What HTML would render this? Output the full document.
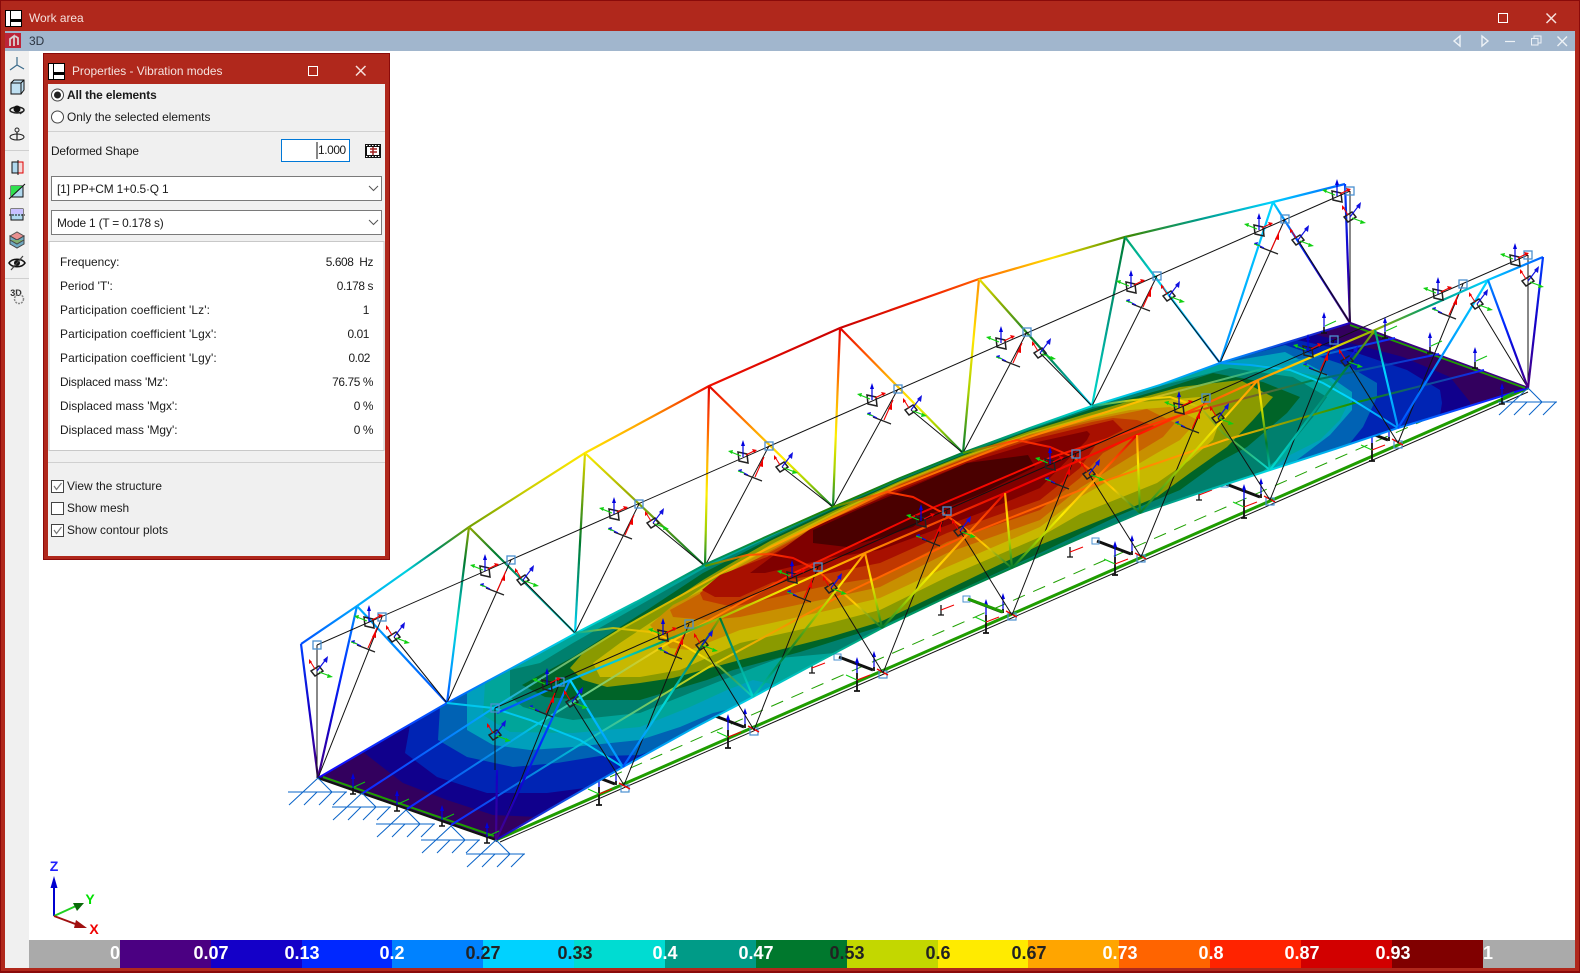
<!DOCTYPE html>
<html><head><meta charset="utf-8"><title>Work area</title>
<style>
html,body{margin:0;padding:0}
body{width:1580px;height:973px;overflow:hidden;position:relative;background:#b0281c;font-family:"Liberation Sans",sans-serif;font-size:11.9px;color:#1a1a1a}
.a{position:absolute;white-space:pre;line-height:16px}
.b{position:absolute}
.v{letter-spacing:-.4px}
.p{letter-spacing:.14px}
.lg{position:absolute;top:940px;height:28px}
.lt{position:absolute;top:940px;line-height:27px;font-weight:bold;font-size:18px;transform:translateX(-50%);color:#fff}
.d{color:#222}
</style></head><body>
<div class="b" style="left:0;top:0;width:1580px;height:1px;background:#8a0a0a"></div>
<div class="b" style="left:0;top:0;width:1px;height:973px;background:#8a0a0a"></div>
<div class="b" style="left:1579px;top:0;width:1px;height:973px;background:#8a0a0a"></div>
<div class="b" style="left:0;top:971px;width:1580px;height:2px;background:#8a0a0a"></div>
<div class="a" style="left:29px;top:10px;color:#f5e2de">Work area</div>
<div class="b" style="left:5px;top:31px;width:1570px;height:20px;background:#a1b6cd"></div>
<div class="b" style="left:5px;top:51px;width:24px;height:917px;background:#f0f0f0"></div>
<div class="b" style="left:29px;top:51px;width:1546px;height:889px;background:#fff"></div>
<div class="a" style="left:29px;top:33px;color:#2b3440">3D</div>

<svg class="b" style="left:0;top:0" width="1580" height="973" viewBox="0 0 1580 973" xmlns="http://www.w3.org/2000/svg">
<defs>
<linearGradient id="RG"><stop offset="0" stop-color="#e00000"/><stop offset=".2" stop-color="#ff5000"/><stop offset=".4" stop-color="#ffb000"/><stop offset=".6" stop-color="#ffee00"/><stop offset=".8" stop-color="#a0d000"/><stop offset="1" stop-color="#007a30"/></linearGradient>
<linearGradient id="OG"><stop offset="0" stop-color="#ff9000"/><stop offset=".35" stop-color="#ffe600"/><stop offset=".65" stop-color="#a8d000"/><stop offset="1" stop-color="#007a30"/></linearGradient>
<linearGradient id="YG"><stop offset="0" stop-color="#ffee00"/><stop offset=".35" stop-color="#a0b000"/><stop offset="1" stop-color="#007a30"/></linearGradient>
<linearGradient id="YC"><stop offset="0" stop-color="#e8e000"/><stop offset=".18" stop-color="#90b000"/><stop offset=".5" stop-color="#007a30"/><stop offset=".75" stop-color="#009b87"/><stop offset="1" stop-color="#00d8ff"/></linearGradient>
<linearGradient id="OT"><stop offset="0" stop-color="#ff9000"/><stop offset=".2" stop-color="#ffe600"/><stop offset=".4" stop-color="#a8d000"/><stop offset=".7" stop-color="#007a30"/><stop offset="1" stop-color="#00c8c0"/></linearGradient>
<linearGradient id="LC"><stop offset="0" stop-color="#90a800"/><stop offset=".25" stop-color="#007a30"/><stop offset=".55" stop-color="#009b87"/><stop offset="1" stop-color="#00dcd2"/></linearGradient>
<linearGradient id="GC"><stop offset="0" stop-color="#007a30"/><stop offset=".5" stop-color="#009b87"/><stop offset="1" stop-color="#00dcd2"/></linearGradient>
<linearGradient id="GB"><stop offset="0" stop-color="#90a800"/><stop offset=".2" stop-color="#007a30"/><stop offset=".35" stop-color="#009b87"/><stop offset=".55" stop-color="#00dcd2"/><stop offset=".8" stop-color="#00a0ff"/><stop offset="1" stop-color="#0050ff"/></linearGradient>
<linearGradient id="GA"><stop offset="0" stop-color="#00a060"/><stop offset=".4" stop-color="#00d8ff"/><stop offset="1" stop-color="#0090ff"/></linearGradient>
<linearGradient id="CA"><stop offset="0" stop-color="#00d8ff"/><stop offset="1" stop-color="#0090ff"/></linearGradient>
<linearGradient id="CB"><stop offset="0" stop-color="#00d8ff"/><stop offset="1" stop-color="#0050ff"/></linearGradient>
<linearGradient id="AB"><stop offset="0" stop-color="#00b0ff"/><stop offset="1" stop-color="#0050ff"/></linearGradient>
<linearGradient id="BP"><stop offset="0" stop-color="#0040ff"/><stop offset=".5" stop-color="#1400c8"/><stop offset="1" stop-color="#4b0082"/></linearGradient>
<linearGradient id="AP"><stop offset="0" stop-color="#0090ff"/><stop offset=".4" stop-color="#0028ff"/><stop offset=".7" stop-color="#1400c8"/><stop offset="1" stop-color="#4b0082"/></linearGradient>
<linearGradient id="CP"><stop offset="0" stop-color="#00d8ff"/><stop offset=".35" stop-color="#0028ff"/><stop offset=".6" stop-color="#1400c8"/><stop offset="1" stop-color="#4b0082"/></linearGradient>

<linearGradient id="f1" href="#BP" gradientUnits="userSpaceOnUse" x1="301" y1="644" x2="318" y2="778"/>
<linearGradient id="f2" href="#AP" gradientUnits="userSpaceOnUse" x1="357" y1="606" x2="318" y2="778"/>
<linearGradient id="f3" href="#AB" gradientUnits="userSpaceOnUse" x1="357" y1="606" x2="447" y2="703"/>
<linearGradient id="f4" href="#GB" gradientUnits="userSpaceOnUse" x1="469" y1="527" x2="447" y2="703"/>
<linearGradient id="f5" href="#LC" gradientUnits="userSpaceOnUse" x1="469" y1="527" x2="575" y2="633"/>
<linearGradient id="f6" href="#YC" gradientUnits="userSpaceOnUse" x1="585" y1="453" x2="575" y2="633"/>
<linearGradient id="f7" href="#YG" gradientUnits="userSpaceOnUse" x1="585" y1="453" x2="705" y2="566"/>
<linearGradient id="f8" href="#RG" gradientUnits="userSpaceOnUse" x1="709" y1="386" x2="705" y2="566"/>
<linearGradient id="f9" href="#RG" gradientUnits="userSpaceOnUse" x1="709" y1="386" x2="833" y2="507"/>
<linearGradient id="f10" href="#RG" gradientUnits="userSpaceOnUse" x1="840" y1="328" x2="833" y2="507"/>
<linearGradient id="f11" href="#RG" gradientUnits="userSpaceOnUse" x1="840" y1="328" x2="963" y2="453"/>
<linearGradient id="f12" href="#OG" gradientUnits="userSpaceOnUse" x1="979" y1="279" x2="963" y2="453"/>
<linearGradient id="f13" href="#YC" gradientUnits="userSpaceOnUse" x1="979" y1="279" x2="1092" y2="406"/>
<linearGradient id="f14" href="#GC" gradientUnits="userSpaceOnUse" x1="1125" y1="237" x2="1092" y2="406"/>
<linearGradient id="f15" href="#GA" gradientUnits="userSpaceOnUse" x1="1125" y1="237" x2="1220" y2="363"/>
<linearGradient id="f16" href="#CA" gradientUnits="userSpaceOnUse" x1="1273" y1="202" x2="1220" y2="363"/>
<linearGradient id="f17" href="#CP" gradientUnits="userSpaceOnUse" x1="1273" y1="202" x2="1350" y2="323"/>
<linearGradient id="f18" href="#BP" gradientUnits="userSpaceOnUse" x1="1345" y1="184" x2="1350" y2="323"/>

<linearGradient id="n1" href="#BP" gradientUnits="userSpaceOnUse" x1="497" y1="713" x2="496" y2="840"/>
<linearGradient id="n2" href="#AP" gradientUnits="userSpaceOnUse" x1="570" y1="680" x2="496" y2="840"/>
<linearGradient id="n3" href="#CA" gradientUnits="userSpaceOnUse" x1="570" y1="680" x2="623" y2="767"/>
<linearGradient id="n4" href="#GB" gradientUnits="userSpaceOnUse" x1="720" y1="618" x2="623" y2="767"/>
<linearGradient id="n5" href="#GC" gradientUnits="userSpaceOnUse" x1="720" y1="618" x2="753" y2="697"/>
<linearGradient id="n6" href="#OT" gradientUnits="userSpaceOnUse" x1="865" y1="553" x2="753" y2="697"/>
<linearGradient id="n7" href="#OG" gradientUnits="userSpaceOnUse" x1="865" y1="553" x2="882" y2="628"/>
<linearGradient id="n8" href="#RG" gradientUnits="userSpaceOnUse" x1="1005" y1="493" x2="882" y2="628"/>
<linearGradient id="n9" href="#OG" gradientUnits="userSpaceOnUse" x1="1005" y1="493" x2="1012" y2="568"/>
<linearGradient id="n10" href="#RG" gradientUnits="userSpaceOnUse" x1="1137" y1="435" x2="1012" y2="568"/>
<linearGradient id="n11" href="#OG" gradientUnits="userSpaceOnUse" x1="1137" y1="435" x2="1140" y2="513"/>
<linearGradient id="n12" href="#OG" gradientUnits="userSpaceOnUse" x1="1258" y1="380" x2="1140" y2="513"/>
<linearGradient id="n13" href="#OT" gradientUnits="userSpaceOnUse" x1="1258" y1="380" x2="1270" y2="470"/>
<linearGradient id="n14" href="#LC" gradientUnits="userSpaceOnUse" x1="1375" y1="330" x2="1270" y2="470"/>
<linearGradient id="n15" href="#GA" gradientUnits="userSpaceOnUse" x1="1375" y1="330" x2="1398" y2="428"/>
<linearGradient id="n16" href="#CB" gradientUnits="userSpaceOnUse" x1="1488" y1="280" x2="1398" y2="428"/>
<linearGradient id="n17" href="#AP" gradientUnits="userSpaceOnUse" x1="1488" y1="280" x2="1528" y2="388"/>
<linearGradient id="n18" href="#BP" gradientUnits="userSpaceOnUse" x1="1543" y1="257" x2="1528" y2="388"/>

<linearGradient id="tf" gradientUnits="userSpaceOnUse" x1="301" y1="0" x2="1345" y2="0"><stop offset="0" stop-color="#0050ff"/><stop offset=".054" stop-color="#00a8ff"/><stop offset=".10" stop-color="#00d0e0"/><stop offset=".13" stop-color="#008a60"/><stop offset=".16" stop-color="#70a000"/><stop offset=".22" stop-color="#d0d000"/><stop offset=".27" stop-color="#ffe800"/><stop offset=".33" stop-color="#ffa000"/><stop offset=".39" stop-color="#f01000"/><stop offset=".516" stop-color="#c80000"/><stop offset=".60" stop-color="#f02000"/><stop offset=".65" stop-color="#ff6000"/><stop offset=".72" stop-color="#ffe000"/><stop offset=".79" stop-color="#408800"/><stop offset=".86" stop-color="#009b87"/><stop offset=".93" stop-color="#00d0ff"/><stop offset="1" stop-color="#0060ff"/></linearGradient>
<linearGradient id="tn" gradientUnits="userSpaceOnUse" x1="497" y1="0" x2="1543" y2="0"><stop offset="0" stop-color="#0040ff"/><stop offset=".07" stop-color="#00b0ff"/><stop offset=".12" stop-color="#00d0d0"/><stop offset=".16" stop-color="#00a060"/><stop offset=".213" stop-color="#a0c000"/><stop offset=".28" stop-color="#ffe800"/><stop offset=".352" stop-color="#ff9000"/><stop offset=".486" stop-color="#e80000"/><stop offset=".612" stop-color="#ff1000"/><stop offset=".727" stop-color="#ff9000"/><stop offset=".786" stop-color="#ffe800"/><stop offset=".839" stop-color="#90b000"/><stop offset=".89" stop-color="#009b70"/><stop offset=".945" stop-color="#00d0ff"/><stop offset="1" stop-color="#0060ff"/></linearGradient>
<linearGradient id="et" gradientUnits="userSpaceOnUse" x1="318" y1="0" x2="1350" y2="0"><stop offset="0" stop-color="#1400ff"/><stop offset=".125" stop-color="#0060ff"/><stop offset=".25" stop-color="#00d8e0"/><stop offset=".375" stop-color="#009060"/><stop offset=".5" stop-color="#208000"/><stop offset=".625" stop-color="#008040"/><stop offset=".75" stop-color="#00d8d8"/><stop offset=".875" stop-color="#0090ff"/><stop offset="1" stop-color="#2000c0"/></linearGradient>
<linearGradient id="el" gradientUnits="userSpaceOnUse" x1="496" y1="0" x2="1528" y2="0"><stop offset="0" stop-color="#2000c0"/><stop offset=".125" stop-color="#0090ff"/><stop offset=".25" stop-color="#00d0e0"/><stop offset=".375" stop-color="#00a070"/><stop offset=".5" stop-color="#008040"/><stop offset=".625" stop-color="#009070"/><stop offset=".75" stop-color="#00d8e0"/><stop offset=".875" stop-color="#0080ff"/><stop offset="1" stop-color="#1000ff"/></linearGradient>
<linearGradient id="s1" gradientUnits="userSpaceOnUse" x1="363" y1="0" x2="1395" y2="0"><stop offset="0" stop-color="#1020ff"/><stop offset=".125" stop-color="#00b0ff"/><stop offset=".25" stop-color="#c0c000"/><stop offset=".375" stop-color="#ffb000"/><stop offset=".5" stop-color="#ff7000"/><stop offset=".625" stop-color="#ff7000"/><stop offset=".75" stop-color="#ffc000"/><stop offset=".875" stop-color="#00b0a0"/><stop offset="1" stop-color="#1020ff"/></linearGradient>
<linearGradient id="s2" gradientUnits="userSpaceOnUse" x1="407" y1="0" x2="1439" y2="0"><stop offset="0" stop-color="#1020ff"/><stop offset=".125" stop-color="#00c8e0"/><stop offset=".25" stop-color="#ffd000"/><stop offset=".375" stop-color="#ff2000"/><stop offset=".5" stop-color="#ee0000"/><stop offset=".625" stop-color="#ff1000"/><stop offset=".75" stop-color="#ff4000"/><stop offset=".875" stop-color="#008050"/><stop offset="1" stop-color="#1020ff"/></linearGradient>
<linearGradient id="s3" gradientUnits="userSpaceOnUse" x1="451" y1="0" x2="1484" y2="0"><stop offset="0" stop-color="#1020ff"/><stop offset=".125" stop-color="#00c0d0"/><stop offset=".25" stop-color="#e0d000"/><stop offset=".375" stop-color="#ff7000"/><stop offset=".5" stop-color="#ff5000"/><stop offset=".625" stop-color="#ff7000"/><stop offset=".75" stop-color="#ffb000"/><stop offset=".875" stop-color="#109000"/><stop offset="1" stop-color="#1020ff"/></linearGradient>
<linearGradient id="c2" gradientUnits="userSpaceOnUse" x1="575" y1="0" x2="753" y2="0"><stop offset="0" stop-color="#00b0a0"/><stop offset=".25" stop-color="#d0c000"/><stop offset=".5" stop-color="#ffc000"/><stop offset=".7" stop-color="#ffe000"/><stop offset=".88" stop-color="#40a050"/><stop offset="1" stop-color="#00d0d0"/></linearGradient>
<linearGradient id="c3" gradientUnits="userSpaceOnUse" x1="705" y1="0" x2="882" y2="0"><stop offset="0" stop-color="#40a000"/><stop offset=".25" stop-color="#ff6000"/><stop offset=".5" stop-color="#f01000"/><stop offset=".65" stop-color="#ff4000"/><stop offset=".85" stop-color="#ffd000"/><stop offset="1" stop-color="#007a30"/></linearGradient>
<linearGradient id="c4" gradientUnits="userSpaceOnUse" x1="833" y1="0" x2="1012" y2="0"><stop offset="0" stop-color="#40a000"/><stop offset=".25" stop-color="#ff6000"/><stop offset=".5" stop-color="#f01000"/><stop offset=".65" stop-color="#ff4000"/><stop offset=".85" stop-color="#ffd000"/><stop offset="1" stop-color="#007a30"/></linearGradient>
<linearGradient id="c5" gradientUnits="userSpaceOnUse" x1="963" y1="0" x2="1140" y2="0"><stop offset="0" stop-color="#40a000"/><stop offset=".25" stop-color="#ff5000"/><stop offset=".5" stop-color="#f01000"/><stop offset=".7" stop-color="#ff5000"/><stop offset=".85" stop-color="#ffd000"/><stop offset="1" stop-color="#007a30"/></linearGradient>
<linearGradient id="c6" gradientUnits="userSpaceOnUse" x1="1092" y1="0" x2="1270" y2="0"><stop offset="0" stop-color="#00b0a0"/><stop offset=".25" stop-color="#e0d000"/><stop offset=".5" stop-color="#ffd000"/><stop offset=".75" stop-color="#60a020"/><stop offset="1" stop-color="#00d8d8"/></linearGradient>
<linearGradient id="c7" gradientUnits="userSpaceOnUse" x1="1220" y1="0" x2="1398" y2="0"><stop offset="0" stop-color="#0090ff"/><stop offset=".4" stop-color="#00c8e8"/><stop offset=".7" stop-color="#00d8ff"/><stop offset="1" stop-color="#0090ff"/></linearGradient>

<g id="S"><path d="M-5-5 4-3 5 6-4 4Z" fill="none" stroke="#222" stroke-width="1.5"/><path d="M0 0V-13" stroke="#0000e0" stroke-width="1.2"/><path d="M0-17-2-11H2Z" fill="#0000e0"/><path d="M-2-1-12-5" stroke="#10d010" stroke-width="1.1"/><path d="M-15-6-10-7-11-3Z" fill="#10d010"/><path d="M3-2 11-6" stroke="#f00000" stroke-width="1.1"/><path d="M14-7 9-8 11-4Z" fill="#f00000"/></g>
<g id="D"><path d="M-6 0 2-5 6 0-2 5Z" fill="none" stroke="#222" stroke-width="1.5"/><path d="M0 0 10-13" stroke="#1010e0" stroke-width="1.2"/><path d="M11-15 6-11 10-8Z" fill="#1010e0"/><path d="M2 1 13 5" stroke="#10d010" stroke-width="1.1"/><path d="M16 6 11 3 10 7Z" fill="#10d010"/><path d="M-2-2-7-10" stroke="#f00000" stroke-width="1"/><path d="M-8-12-8-7-5-9Z" fill="#f00000"/></g>
<g id="X"><path d="M-8-3 10 4" stroke="#222" stroke-width="1.3"/><path d="M-4-2-12-6" stroke="#1010e0" stroke-width="1.1"/><path d="M-14-7-10-8-11-4Z" fill="#1010e0"/><path d="M-8-4-14-6" stroke="#10d010" stroke-width="1"/><path d="M3 0 12-20" stroke="#f00000" stroke-width="1.1"/><path d="M11-18 7-11 11-10Z" fill="#f00000"/></g>
<rect id="Q" x="-4" y="-4" width="8" height="8" fill="none" stroke="#4a90d0" stroke-width="1.3"/>
<g id="U"><path d="M-44-16-10-3" stroke="#111" stroke-width="3"/><rect x="-49" y="-19" width="7" height="6" fill="none" stroke="#4a90d0"/><rect x="-4" y="-2" width="8" height="7" fill="none" stroke="#4a90d0" stroke-width="1.2"/><path d="M-6-4 5 2" stroke="#f00000" stroke-width="1.3"/><path d="M-26-12V0" stroke="#0000e0" stroke-width="1.3"/><path d="M-26-16-28-10H-24Z" fill="#0000e0"/><path d="M-26 0V18M-29 18H-23" stroke="#111" stroke-width="1.8"/><path d="M-26 7-13 2" stroke="#f00000" stroke-width="1.1"/><path d="M-26 7-37 2" stroke="#10d010" stroke-width="1.1"/><path d="M-9-18V-6" stroke="#0000e0" stroke-width="1.2"/><path d="M-9-22-11-16H-7Z" fill="#0000e0"/><path d="M-9-6V-2" stroke="#111" stroke-width="1.8"/><path d="M-71-10V0M-74 0H-68" stroke="#111" stroke-width="1.3"/><path d="M-71-5-58-10" stroke="#f00000"/></g>
<g id="I"><path d="M0-16V-5" stroke="#0000e0" stroke-width="1.2"/><path d="M0-20-2-14H2Z" fill="#0000e0"/><path d="M0-5V1M-3 1H3" stroke="#111" stroke-width="1.6"/><path d="M1-6 12-11" stroke="#10c010"/></g>
<g id="H" fill="none" stroke="#0a64c8" stroke-width="1"><path d="M-30 14H29M-29 27 0 0 14 14M-14 27-1 14M1 27 14 14M15 27 28 14" /></g>
</defs>

<!-- dashed, thick near beams -->
<path d="M610 777 1500 387" stroke="#1fa000" stroke-width="1" stroke-dasharray="13 9" fill="none"/>
<path d="M496 840 1528 388" stroke="#1f9c00" stroke-width="3" fill="none"/>
<path d="M500 842 1528 392" stroke="#111" stroke-width="1" fill="none"/>
<!-- lower units, behind the deck -->
<use href="#U" x="625" y="787"/><use href="#U" x="754" y="730"/><use href="#U" x="883" y="673"/><use href="#U" x="1012" y="615"/><use href="#U" x="1141" y="557"/><use href="#U" x="1270" y="500"/><use href="#U" x="1398" y="443"/>
<path d="M968 599 1003 612" stroke="#1f9c00" stroke-width="3"/>

<!-- far truss -->
<g fill="none" stroke-width="2.2">
<polyline points="301,644 357,606 469,527 585,453 709,386 840,328 979,279 1125,237 1273,202 1345,184" stroke="url(#tf)"/>
<line x1="301" y1="644" x2="318" y2="778" stroke="url(#f1)"/><line x1="357" y1="606" x2="318" y2="778" stroke="url(#f2)"/><line x1="357" y1="606" x2="447" y2="703" stroke="url(#f3)"/><line x1="469" y1="527" x2="447" y2="703" stroke="url(#f4)"/><line x1="469" y1="527" x2="575" y2="633" stroke="url(#f5)"/><line x1="585" y1="453" x2="575" y2="633" stroke="url(#f6)"/><line x1="585" y1="453" x2="705" y2="566" stroke="url(#f7)"/><line x1="709" y1="386" x2="705" y2="566" stroke="url(#f8)"/><line x1="709" y1="386" x2="833" y2="507" stroke="url(#f9)"/><line x1="840" y1="328" x2="833" y2="507" stroke="url(#f10)"/><line x1="840" y1="328" x2="963" y2="453" stroke="url(#f11)"/><line x1="979" y1="279" x2="963" y2="453" stroke="url(#f12)"/><line x1="979" y1="279" x2="1092" y2="406" stroke="url(#f13)"/><line x1="1125" y1="237" x2="1092" y2="406" stroke="url(#f14)"/><line x1="1125" y1="237" x2="1220" y2="363" stroke="url(#f15)"/><line x1="1273" y1="202" x2="1220" y2="363" stroke="url(#f16)"/><line x1="1273" y1="202" x2="1350" y2="323" stroke="url(#f17)"/><line x1="1345" y1="184" x2="1350" y2="323" stroke="url(#f18)"/>
</g>

<!-- far black lines -->
<path d="M317 645 1350 191M317 645V778M382 617 318 778M394 637 447 703M511 560 447 703M523 580 575 633M639 504 575 633M653 523 705 566M769 446 705 566M782 467 833 507M898 389 833 507M911 410 963 453M1027 332 963 453M1040 353 1092 406M1157 276 1092 406M1169 296 1220 363M1285 219 1220 363M1298 240 1350 323M1350 191V323" stroke="#111" stroke-width="1" fill="none"/>

<!-- deck contours -->
<polygon fill="#33005e" points="318,778 383,740 447,703 512,668 576,633 640,600 704,565 770,535 833,507 900,478 962,453 1030,428 1092,406 1160,385 1220,363 1285,343 1350,323 1528,388 1463,408 1398,428 1335,449 1270,470 1205,491 1140,513 1076,540 1012,568 947,597 882,628 818,662 753,697 690,730 623,767 560,803 496,840"/>
<polygon fill="#10008c" points="363,752 383,740 447,703 512,668 576,633 640,600 704,565 770,535 833,507 900,478 962,453 1030,428 1092,406 1160,385 1220,363 1285,343 1313,334 1350,343 1403,357 1450,377 1470,402 1470,406 1398,428 1335,449 1270,470 1205,491 1140,513 1076,540 1012,568 947,597 882,628 818,662 753,697 690,730 623,767 560,803 537,817 493,815 447,800 403,783"/>
<polygon fill="#0024b4" points="410,725 447,703 512,668 576,633 640,600 704,565 770,535 833,507 900,478 962,453 1030,428 1092,406 1160,385 1220,363 1285,343 1297,340 1357,353 1407,370 1440,390 1442,403 1440,415 1398,428 1335,449 1270,470 1205,491 1140,513 1076,540 1012,568 947,597 882,628 818,662 753,697 690,730 623,767 585,788 547,793 487,793 437,777 405,753"/>
<polygon fill="#0062b4" points="440,707 447,703 512,668 576,633 640,600 704,565 770,535 833,507 900,478 962,453 1030,428 1092,406 1160,385 1220,363 1285,345 1350,367 1377,383 1377,397 1363,427 1350,443 1335,449 1270,470 1205,491 1140,513 1076,540 1012,568 947,597 882,628 818,662 753,697 690,730 648,752 640,755 600,756 557,763 513,767 467,757 438,740"/>
<polygon fill="#00a0bc" points="467,692 512,668 576,633 640,600 704,565 770,535 833,507 900,478 962,453 1030,428 1092,406 1160,385 1220,363 1285,352 1323,372 1352,392 1352,410 1330,435 1297,460 1270,470 1205,491 1140,513 1076,540 1012,568 947,597 882,628 818,662 753,697 730,709 713,713 680,727 640,740 573,747 530,750 493,745 467,730"/>
<polygon fill="#00a59a" points="485,683 512,668 576,633 640,600 704,565 770,535 833,507 900,478 962,453 1030,428 1092,406 1160,385 1220,363 1263,365 1327,378 1350,400 1340,420 1320,440 1290,455 1270,470 1205,491 1140,513 1076,540 1012,568 947,597 882,628 818,662 775,685 753,680 727,690 690,707 640,727 573,733 510,732 483,715"/>
<polygon fill="#00806e" points="510,670 540,663 573,643 640,605 703,569 770,537 833,508 900,479 962,454 1030,429 1092,407 1160,386 1230,368 1293,377 1327,397 1313,417 1280,457 1262,472 1205,491 1140,513 1076,540 1012,568 947,597 882,628 835,653 780,658 753,668 690,693 640,713 573,720 557,717 523,707 510,697"/>
<polygon fill="#006428" points="522,685 540,675 573,657 620,627 647,610 703,573 770,539 833,509 900,480 962,455 1030,430 1092,409 1160,390 1213,373 1263,382 1300,397 1287,413 1247,447 1217,463 1180,490 1120,515 1040,553 947,596 882,626 800,652 733,670 707,680 640,700 583,700 545,697"/>
<polygon fill="#8a9a00" points="570,668 583,653 620,630 647,615 673,600 703,580 740,558 770,541 833,511 900,481 962,456 1030,431 1092,412 1140,398 1180,387 1240,380 1273,397 1253,420 1227,447 1190,473 1157,497 1040,545 947,590 880,622 830,637 740,660 673,678 640,683 607,687 583,680"/>
<polygon fill="#c8b800" points="593,663 620,643 650,623 670,610 703,587 740,563 770,545 833,513 900,482 962,457 1030,433 1092,415 1140,402 1200,397 1220,420 1213,440 1190,460 1157,483 1080,514 1040,537 947,577 880,610 830,623 740,643 680,670 640,677 600,677"/>
<polygon fill="#c89000" points="650,625 673,605 703,590 740,565 770,548 833,515 900,483 962,458 1030,434 1092,418 1130,410 1170,407 1198,420 1180,440 1157,453 1123,473 1080,497 1040,527 947,567 880,598 830,610 740,630 690,650 670,648"/>
<polygon fill="#c86400" points="670,610 703,592 740,569 770,551 833,517 900,484 962,459 1030,435 1092,420 1147,409 1175,423 1163,437 1130,457 1080,488 1040,520 947,553 880,587 830,598 740,617 707,620 673,617"/>
<polygon fill="#c03800" points="700,593 727,573 767,554 833,519 900,485 962,460 1030,437 1092,422 1113,418 1137,420 1157,427 1140,433 1103,453 1080,478 1040,510 947,542 880,577 830,585 733,607 703,600"/>
<polygon fill="#a81000" points="702,590 720,575 767,557 807,535 833,522 900,487 962,462 1030,440 1092,425 1113,420 1123,430 1097,443 1080,468 1040,500 947,533 880,563 830,573 773,582 740,597 715,597"/>
<polygon fill="#800000" points="750,573 777,553 813,527 900,490 967,463 1033,443 1087,431 1090,434 1087,440 1040,488 980,513 913,538 880,550 830,558 765,573"/>
<polygon fill="#4a0000" points="813,530 857,510 900,492 967,463 1028,455 1035,467 983,493 933,513 913,527 880,538 847,547 813,543"/>

<!-- deck edges -->
<g fill="none">
<polyline stroke="url(#et)" stroke-width="2" points="318,778 383,740 447,703 512,668 576,633 640,600 704,565 770,535 833,507 900,478 962,453 1030,428 1092,406 1160,385 1220,363 1285,343 1350,323"/>
<polyline stroke="url(#el)" stroke-width="2" points="496,840 560,803 623,767 690,730 753,697 818,662 882,628 947,597 1012,568 1076,540 1140,513 1205,491 1270,470 1335,449 1398,428 1463,408 1528,388"/>
<path d="M318 778 496 840" stroke="#111" stroke-width="2"/>
<path d="M323 777 494 836" stroke="#1f9c00" stroke-width="2"/>
<path d="M1350 323 1528 388" stroke="#3c0080" stroke-width="2.5"/>
<path d="M1350 325 1525 388" stroke="#1f9c00" stroke-width="1.8"/>
<!-- stringers -->
<polyline stroke="url(#s1)" stroke-width="2" points="363,793 492,709 621,629 750,557 879,495 1008,444 1137,402 1266,368 1395,338"/>
<polyline stroke="url(#s2)" stroke-width="2" points="407,809 536,725 665,645 794,573 923,512 1052,457 1181,415 1310,381 1439,354"/>
<polyline stroke="url(#s3)" stroke-width="2" points="451,825 581,744 709,667 838,597 967,535 1096,484 1225,440 1354,403 1484,370"/>
<!-- cross arches -->
<polyline stroke="#00c8f0" stroke-width="2" points="447,703 493,708 530,720 580,740 623,767"/>
<polyline stroke="url(#c2)" stroke-width="2" points="575,633 613,628 650,632 680,643 720,667 753,697"/>
<polyline stroke="url(#c3)" stroke-width="2" points="705,566 747,555 770,554 793,558 817,570 860,608 882,628"/>
<polyline stroke="url(#c4)" stroke-width="2" points="833,507 887,492 913,497 943,513 967,530 1012,568"/>
<polyline stroke="url(#c5)" stroke-width="2" points="963,453 1017,440 1050,447 1073,457 1100,477 1140,513"/>
<polyline stroke="url(#c6)" stroke-width="2" points="1092,406 1133,400 1170,397 1200,407 1223,433 1270,470"/>
<polyline stroke="url(#c7)" stroke-width="2" points="1220,363 1250,365 1290,370 1323,383 1353,400 1398,428"/>
<!-- near black lines: end at the undeformed frame -->
<path d="M495 708 1528 255M495 708V770M560 682 496 842M572 702 624 785M689 624 624 785M702 645 754 730M818 567 754 730M831 588 883 673M947 511 883 673M960 531 1012 615M1076 454 1012 615M1089 474 1141 557M1206 398 1141 557M1218 418 1270 500M1334 340 1270 500M1347 361 1398 443M1463 284 1398 443M1477 304 1528 388M1528 255V388" stroke="#111" stroke-width="1"/>
<!-- near truss -->
<g stroke-width="2.2">
<polyline points="497,713 570,680 720,618 865,553 1005,493 1137,435 1258,380 1375,330 1488,280 1543,257" stroke="url(#tn)"/>
<line x1="497" y1="770" x2="496" y2="840" stroke="url(#n1)"/><line x1="570" y1="680" x2="496" y2="840" stroke="url(#n2)"/><line x1="570" y1="680" x2="623" y2="767" stroke="url(#n3)"/><line x1="720" y1="618" x2="623" y2="767" stroke="url(#n4)"/><line x1="720" y1="618" x2="753" y2="697" stroke="url(#n5)"/><line x1="865" y1="553" x2="753" y2="697" stroke="url(#n6)"/><line x1="865" y1="553" x2="882" y2="628" stroke="url(#n7)"/><line x1="1005" y1="493" x2="882" y2="628" stroke="url(#n8)"/><line x1="1005" y1="493" x2="1012" y2="568" stroke="url(#n9)"/><line x1="1137" y1="435" x2="1012" y2="568" stroke="url(#n10)"/><line x1="1137" y1="435" x2="1140" y2="513" stroke="url(#n11)"/><line x1="1258" y1="380" x2="1140" y2="513" stroke="url(#n12)"/><line x1="1258" y1="380" x2="1270" y2="470" stroke="url(#n13)"/><line x1="1375" y1="330" x2="1270" y2="470" stroke="url(#n14)"/><line x1="1375" y1="330" x2="1398" y2="428" stroke="url(#n15)"/><line x1="1488" y1="280" x2="1398" y2="428" stroke="url(#n16)"/><line x1="1488" y1="280" x2="1528" y2="388" stroke="url(#n17)"/><line x1="1543" y1="257" x2="1528" y2="388" stroke="url(#n18)"/>
</g>
</g>

<!-- supports -->
<use href="#H" x="318" y="778"/><use href="#H" x="362" y="793"/><use href="#H" x="406" y="810"/><use href="#H" x="451" y="826"/><use href="#H" x="496" y="840"/><use href="#H" x="1528" y="388"/>
<!-- edge units -->
<use href="#I" x="353" y="793"/><use href="#I" x="397" y="810"/><use href="#I" x="442" y="825"/><use href="#I" x="487" y="842"/><use href="#I" x="1324" y="332"/><use href="#I" x="1385" y="337"/><use href="#I" x="1430" y="352"/><use href="#I" x="1475" y="367"/><use href="#I" x="1502" y="403"/>
<!-- far row -->
<use href="#Q" x="317" y="645"/><use href="#Q" x="382" y="617"/><use href="#Q" x="511" y="560"/><use href="#Q" x="639" y="504"/><use href="#Q" x="769" y="446"/><use href="#Q" x="898" y="389"/><use href="#Q" x="1027" y="332"/><use href="#Q" x="1157" y="276"/><use href="#Q" x="1285" y="219"/><use href="#Q" x="1350" y="191"/>
<use href="#S" x="369" y="622"/><use href="#S" x="485" y="571"/><use href="#S" x="614" y="514"/><use href="#S" x="743" y="457"/><use href="#S" x="872" y="400"/><use href="#S" x="1001" y="343"/><use href="#S" x="1131" y="287"/><use href="#S" x="1259" y="230"/><use href="#S" x="1337" y="196"/>
<use href="#D" x="317" y="671"/><use href="#D" x="394" y="637"/><use href="#D" x="523" y="580"/><use href="#D" x="653" y="523"/><use href="#D" x="782" y="467"/><use href="#D" x="911" y="410"/><use href="#D" x="1040" y="353"/><use href="#D" x="1169" y="296"/><use href="#D" x="1298" y="240"/><use href="#D" x="1350" y="217"/>
<use href="#X" x="365" y="648"/><use href="#X" x="494" y="591"/><use href="#X" x="622" y="535"/><use href="#X" x="752" y="477"/><use href="#X" x="881" y="420"/><use href="#X" x="1010" y="363"/><use href="#X" x="1140" y="307"/><use href="#X" x="1268" y="250"/>
<!-- near row -->
<use href="#Q" x="495" y="708"/><use href="#Q" x="560" y="682"/><use href="#Q" x="689" y="624"/><use href="#Q" x="818" y="567"/><use href="#Q" x="947" y="511"/><use href="#Q" x="1076" y="454"/><use href="#Q" x="1206" y="398"/><use href="#Q" x="1334" y="340"/><use href="#Q" x="1463" y="284"/><use href="#Q" x="1528" y="255"/>
<use href="#S" x="547" y="685"/><use href="#S" x="663" y="635"/><use href="#S" x="792" y="577"/><use href="#S" x="921" y="521"/><use href="#S" x="1050" y="464"/><use href="#S" x="1179" y="408"/><use href="#S" x="1308" y="351"/><use href="#S" x="1438" y="294"/><use href="#S" x="1515" y="260"/>
<use href="#D" x="495" y="735"/><use href="#D" x="572" y="702"/><use href="#D" x="702" y="645"/><use href="#D" x="831" y="588"/><use href="#D" x="960" y="531"/><use href="#D" x="1089" y="474"/><use href="#D" x="1218" y="418"/><use href="#D" x="1347" y="361"/><use href="#D" x="1477" y="304"/><use href="#D" x="1528" y="281"/>
<use href="#X" x="543" y="713"/><use href="#X" x="672" y="655"/><use href="#X" x="801" y="598"/><use href="#X" x="930" y="542"/><use href="#X" x="1059" y="485"/><use href="#X" x="1189" y="429"/><use href="#X" x="1317" y="371"/><use href="#X" x="1446" y="315"/>

<!-- triad -->
<path d="M54 916V884" stroke="#0000d0" stroke-width="2"/><path d="M54 876 50.5 888H57.5Z" fill="#0000d0"/>
<path d="M54 916 76 906" stroke="#20d020" stroke-width="2"/><path d="M84 903 73 903 77 911Z" fill="#0a6a0a"/>
<path d="M54 916 78 925" stroke="#a01010" stroke-width="2"/><path d="M87 928 76 920 74 928Z" fill="#a01010"/>
<text x="54" y="871" font-family="Liberation Sans" font-weight="bold" font-size="14" fill="#2020ff" text-anchor="middle">Z</text>
<text x="90" y="904" font-family="Liberation Sans" font-weight="bold" font-size="14" fill="#00e000" text-anchor="middle">Y</text>
<text x="94" y="934" font-family="Liberation Sans" font-weight="bold" font-size="14" fill="#f00000" text-anchor="middle">X</text>

<!-- title logo -->
<rect x="5" y="10" width="17" height="17" fill="#000"/><rect x="6" y="11" width="4" height="15" fill="#fff"/><rect x="11" y="11" width="10" height="8" fill="#fff"/><rect x="11" y="22" width="10" height="4" fill="#fff"/>
<!-- title buttons -->
<rect x="1498.5" y="13.5" width="9" height="9" fill="none" stroke="#fff" stroke-width="1"/>
<path d="M1546.5 13.5 1556 23M1556 13.5 1546.5 23" stroke="#f6dfdc" stroke-width="1.5"/>
<!-- tab icon -->
<rect x="5" y="33" width="16" height="15" fill="#bc2438"/><path d="M10 46V39L14 36V46M15 36 18 38V45" fill="none" stroke="#d8d0d0" stroke-width="1.8"/>
<!-- tab buttons -->
<path d="M1460 36 1454 41 1460 46Z" fill="none" stroke="#eef2f6" stroke-width="1.4"/>
<path d="M1482 36 1488 41 1482 46Z" fill="none" stroke="#eef2f6" stroke-width="1.4"/>
<path d="M1505 41.5H1515" stroke="#eef2f6" stroke-width="1.2"/>
<path d="M1531.5 38.5H1538V45H1531.5ZM1534 38V36H1541V43H1538.5" fill="none" stroke="#eef2f6" stroke-width="1"/>
<path d="M1557.5 36.5 1567 46M1567 36.5 1557.5 46" stroke="#eef2f6" stroke-width="1.4"/>
<!-- left toolbar -->
<g fill="none" stroke="#3a6a8a" stroke-width="1.2"><path d="M17 57V65M17 65 10 70M17 65 24 69"/></g>
<path d="M11 83H21V94H11Z M11 83 14 80H24V90L21 94M21 83 24 80" fill="#bfe0f2" stroke="#111"/>
<ellipse cx="17" cy="110" rx="7" ry="3" fill="none" stroke="#222" stroke-width="1.5"/><circle cx="17" cy="109" r="3.5" fill="#111"/><path d="M20 114 23 112" stroke="#222"/>
<circle cx="17" cy="130" r="2" fill="none" stroke="#222"/><path d="M17 132V140" stroke="#222" stroke-width="1.2"/><ellipse cx="17" cy="137" rx="7" ry="3" fill="none" stroke="#222"/>
<rect x="5" y="150" width="24" height="1" fill="#cfcfcf"/>
<rect x="12" y="162" width="6" height="11" fill="#b0d8ee" stroke="#111"/><rect x="18" y="162" width="5" height="11" fill="#f4d8d8" stroke="#e00000"/><path d="M18 160V175" stroke="#111"/>
<rect x="11" y="186" width="12" height="11" fill="#b0d8ee" stroke="#111"/><path d="M11 197V186H23Z" fill="#30e050"/><path d="M9 199 25 184" stroke="#111"/>
<rect x="11" y="209" width="12" height="11" fill="#b0d8ee" stroke="#111"/><rect x="11" y="209" width="12" height="5" fill="#c8c0ff"/><path d="M9 215H25" stroke="#111" stroke-dasharray="2 1"/>
<path d="M10 236 17 232 24 236 17 240Z" fill="#e89090" stroke="#555"/><path d="M10 236V244L17 248 24 244V236L17 240Z" fill="#70a8c0" stroke="#444"/><path d="M10 240 17 244 24 240" stroke="#444" fill="#7fae70"/>
<path d="M9 263C12 258 22 258 25 263 22 268 12 268 9 263Z" fill="none" stroke="#111" stroke-width="1.6"/><circle cx="17" cy="263" r="3" fill="#111"/><path d="M11 270 23 256" stroke="#444" stroke-width="1.2"/>
<rect x="5" y="278" width="24" height="1" fill="#cfcfcf"/>
<text x="16" y="296" font-family="Liberation Sans" font-size="9" font-weight="bold" fill="#333" text-anchor="middle">3D</text><circle cx="19" cy="299" r="4.5" fill="none" stroke="#888" stroke-width="1.5" stroke-dasharray="2 1"/>
</svg>

<!-- legend -->
<div class="lg" style="left:29px;width:91px;background:#aaaaaa"></div>
<div class="lg" style="left:120px;width:91px;background:#4b0082"></div>
<div class="lg" style="left:211px;width:91px;background:#1400c8"></div>
<div class="lg" style="left:302px;width:91px;background:#0028ff"></div>
<div class="lg" style="left:392px;width:91px;background:#0082ff"></div>
<div class="lg" style="left:483px;width:91px;background:#00d2ff"></div>
<div class="lg" style="left:574px;width:91px;background:#00dcd2"></div>
<div class="lg" style="left:665px;width:91px;background:#009b87"></div>
<div class="lg" style="left:756px;width:91px;background:#00782d"></div>
<div class="lg" style="left:847px;width:91px;background:#c3d700"></div>
<div class="lg" style="left:938px;width:91px;background:#ffeb00"></div>
<div class="lg" style="left:1028px;width:91px;background:#ffa500"></div>
<div class="lg" style="left:1119px;width:91px;background:#ff6400"></div>
<div class="lg" style="left:1210px;width:91px;background:#ff2300"></div>
<div class="lg" style="left:1301px;width:91px;background:#d20000"></div>
<div class="lg" style="left:1392px;width:91px;background:#800000"></div>
<div class="lg" style="left:1483px;width:92px;background:#aaaaaa"></div>
<span class="lt" style="left:115px">0</span><span class="lt" style="left:211px">0.07</span><span class="lt" style="left:302px">0.13</span><span class="lt" style="left:392px">0.2</span><span class="lt d" style="left:483px">0.27</span><span class="lt d" style="left:575px">0.33</span><span class="lt" style="left:665px">0.4</span><span class="lt" style="left:756px">0.47</span><span class="lt d" style="left:847px">0.53</span><span class="lt d" style="left:938px">0.6</span><span class="lt d" style="left:1029px">0.67</span><span class="lt" style="left:1120px">0.73</span><span class="lt" style="left:1211px">0.8</span><span class="lt" style="left:1302px">0.87</span><span class="lt" style="left:1393px">0.93</span><span class="lt" style="left:1488px">1</span>

<!-- properties panel -->
<div class="b" style="left:43px;top:53px;width:345px;height:505px;background:#b0281c;border:1px solid #8a0a0a"></div>
<div class="b" style="left:48px;top:84px;width:337px;height:472px;background:#f0f0f0"></div>
<div class="a" style="left:72px;top:63px;color:#f5e2de">Properties - Vibration modes</div>
<svg class="b" style="left:43px;top:53px" width="347" height="40" xmlns="http://www.w3.org/2000/svg">
<rect x="5" y="10" width="17" height="17" fill="#000"/><rect x="6" y="11" width="4" height="15" fill="#fff"/><rect x="11" y="11" width="10" height="8" fill="#fff"/><rect x="11" y="22" width="10" height="4" fill="#fff"/>
<rect x="265.5" y="13.5" width="9" height="9" fill="none" stroke="#fff"/>
<path d="M313 13 322.5 22.5M322.5 13 313 22.5" stroke="#f6dfdc" stroke-width="1.5"/>
</svg>
<svg class="b" style="left:48px;top:84px" width="337" height="472" xmlns="http://www.w3.org/2000/svg">
<circle cx="9.5" cy="11" r="6" fill="#fff" stroke="#444"/><circle cx="9.5" cy="11" r="3.5" fill="#222"/>
<circle cx="9.5" cy="33" r="6" fill="#fff" stroke="#444"/>
<rect x="0" y="47" width="337" height="1" fill="#d0d0d0"/>
<rect x="233.5" y="55.5" width="68" height="22" fill="#fff" stroke="#0078d7"/>
<path d="M269 58V75" stroke="#111"/>
<rect x="317" y="60" width="16" height="14" fill="#111"/><rect x="319" y="63" width="12" height="8" fill="#fff"/><path d="M318 61.5H332M318 72.5H332" stroke="#fff" stroke-dasharray="1.5 1.5"/><path d="M325 63V71M322 65H329M322 68H329" stroke="#a02020" stroke-width="1.5"/>
<rect x="3.5" y="92.5" width="330" height="24" fill="#fff" stroke="#7a7a7a"/>
<rect x="3.5" y="126.5" width="330" height="24" fill="#fff" stroke="#7a7a7a"/>
<path d="M321 102 325.5 106.5 330 102M321 136 325.5 140.5 330 136" fill="none" stroke="#555"/>
<rect x="1" y="157.5" width="335" height="209" fill="#fff" stroke="#c8c8c8"/>
<rect x="0" y="378" width="337" height="1" fill="#d0d0d0"/>
<rect x="3.5" y="396.5" width="12" height="12" fill="#fff" stroke="#444"/><path d="M6 402 8.5 405.5 13.5 399" fill="none" stroke="#777" stroke-width="1.2"/>
<rect x="3.5" y="418.5" width="12" height="12" fill="#fff" stroke="#444"/>
<rect x="3.5" y="440.5" width="12" height="12" fill="#fff" stroke="#444"/><path d="M6 446 8.5 449.5 13.5 443" fill="none" stroke="#777" stroke-width="1.2"/>
</svg>
<div class="a" style="left:67px;top:87px;font-weight:bold;letter-spacing:-.1px">All the elements</div>
<div class="a" style="left:67px;top:109px">Only the selected elements</div>
<div class="a" style="left:51px;top:143px;letter-spacing:-.15px">Deformed Shape</div>
<div class="a v" style="left:318px;top:142px">1.000</div>
<div class="a" style="left:57px;top:181px;letter-spacing:-.15px">[1] PP+CM 1+0.5·Q 1</div>
<div class="a" style="left:57px;top:215px;letter-spacing:-.2px">Mode 1 (T = 0.178 s)</div>
<div class="a" style="left:60px;top:254px">Frequency:</div><div class="a v" style="right:1207px;top:254px">5.608  Hz</div>
<div class="a" style="left:60px;top:278px">Period 'T':</div><div class="a v" style="right:1207px;top:278px">0.178 s</div>
<div class="a p" style="left:60px;top:302px">Participation coefficient 'Lz':</div><div class="a v" style="right:1211px;top:302px">1</div>
<div class="a p" style="left:60px;top:326px">Participation coefficient 'Lgx':</div><div class="a v" style="right:1211px;top:326px">0.01</div>
<div class="a p" style="left:60px;top:350px">Participation coefficient 'Lgy':</div><div class="a v" style="right:1210px;top:350px">0.02</div>
<div class="a" style="left:60px;top:374px;letter-spacing:-.15px">Displaced mass 'Mz':</div><div class="a v" style="right:1207px;top:374px">76.75 %</div>
<div class="a" style="left:60px;top:398px">Displaced mass 'Mgx':</div><div class="a v" style="right:1207px;top:398px">0 %</div>
<div class="a" style="left:60px;top:422px">Displaced mass 'Mgy':</div><div class="a v" style="right:1207px;top:422px">0 %</div>
<div class="a" style="left:67px;top:478px">View the structure</div>
<div class="a" style="left:67px;top:500px">Show mesh</div>
<div class="a" style="left:67px;top:522px">Show contour plots</div>
</body></html>
